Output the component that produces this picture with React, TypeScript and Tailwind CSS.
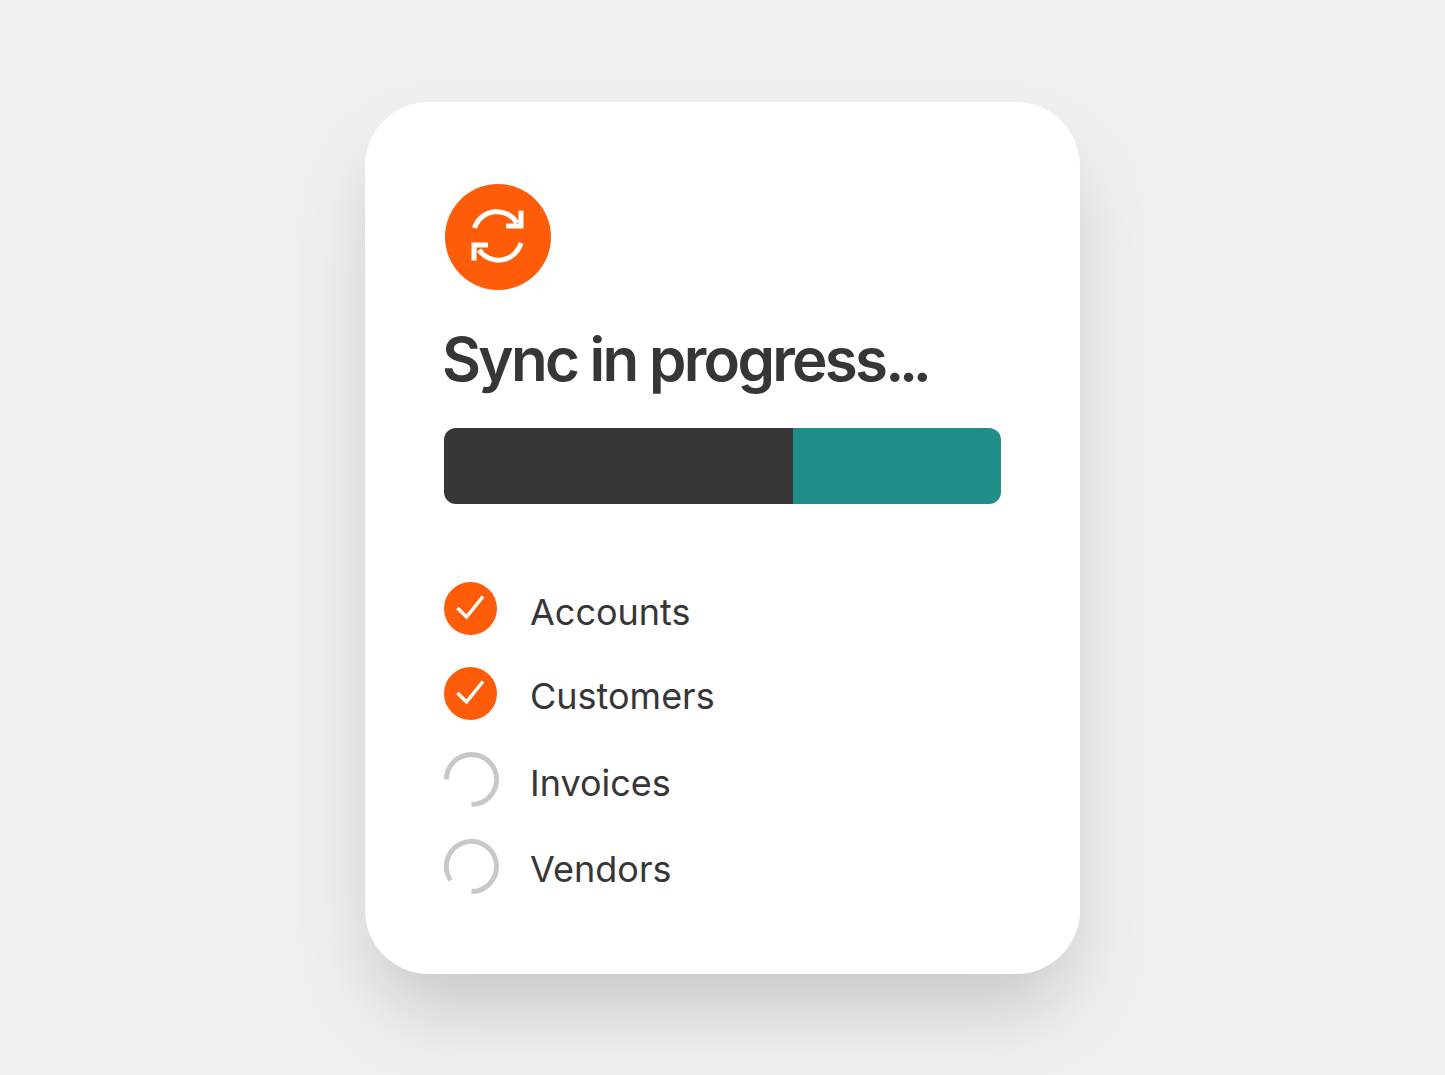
const rows = [
  { label: "Accounts", state: "done", mt: "mt-0", textMt: "mt-[2px]" },
  { label: "Customers", state: "done", mt: "mt-[29px]", textMt: "mt-px" },
  { label: "Invoices", state: "first", mt: "mt-[29px]", textMt: "mt-[3px]" },
  { label: "Vendors", state: "second", mt: "mt-[31px]", textMt: "mt-[2px]" },
];

function SyncBadge() {
  return (
    <div className="ml-px flex h-[106px] w-[106px] items-center justify-center rounded-full bg-[#ff5c0a]">
      <svg width="106" height="106" viewBox="0 0 106 106" fill="none" stroke="white" strokeWidth="5">
        <path d="M29.5 44 A23.5 23.5 0 0 1 72 39" />
        <path d="M76 26.7 V42 H61" />
        <path d="M76 59 A23.5 23.5 0 0 1 34 66" />
        <path d="M29 76.5 V61 H43" />
      </svg>
    </div>
  );
}

function CheckBadge() {
  return (
    <div className="flex h-[53px] w-[53px] items-center justify-center rounded-full bg-[#ff5c0a]">
      <svg width="53" height="53" viewBox="0 0 53 53" fill="none" stroke="white" strokeWidth="3.5">
        <path d="M13.5 26 L22.5 35 L39 14.5" />
      </svg>
    </div>
  );
}

function Spinner({ start }: { start: string }) {
  return (
    <svg width="55" height="55" viewBox="0 0 56 56" fill="none" stroke="#c8c8c8" strokeWidth="5">
      <path d={`${start} A25.5 25.5 0 1 1 28 53.5`} />
    </svg>
  );
}

export default function App() {
  return (
    <div className="flex h-screen justify-center overflow-hidden bg-[#eff0f2] pt-[102px] font-['Inter',sans-serif] text-[#373536]">
      <div className="h-[872px] w-[715px] rounded-[64px] bg-white pl-[79px] pr-[79px] pt-[82px] shadow-[0_44px_80px_-12px_rgba(0,0,0,0.18)]">
        <SyncBadge />
        <h1 className="mt-[33px] -ml-[2px] h-[72px] text-[60px] font-semibold leading-[72px] tracking-[-0.045em] whitespace-nowrap">
          Sync in progress<span className="tracking-[-0.09em]">...</span>
        </h1>
        <div className="mt-[33px] flex h-[76px] w-[557px] overflow-hidden rounded-xl">
          <div className="w-[349px] bg-[#373536]" />
          <div className="flex-1 bg-[#218d89]" />
        </div>
        <ul className="mt-[78px]">
          {rows.map((row) => (
            <li key={row.label} className={`flex h-[56px] items-start ${row.mt}`}>
              <div className="w-[86px]">
                {row.state === "done" && <CheckBadge />}
                {row.state === "first" && <Spinner start="M2.5 28" />}
                {row.state === "second" && <Spinner start="M6.6 42" />}
              </div>
              <span className={`text-[36px] leading-[56px] ${row.textMt}`}>{row.label}</span>
            </li>
          ))}
        </ul>
      </div>
    </div>
  );
}
